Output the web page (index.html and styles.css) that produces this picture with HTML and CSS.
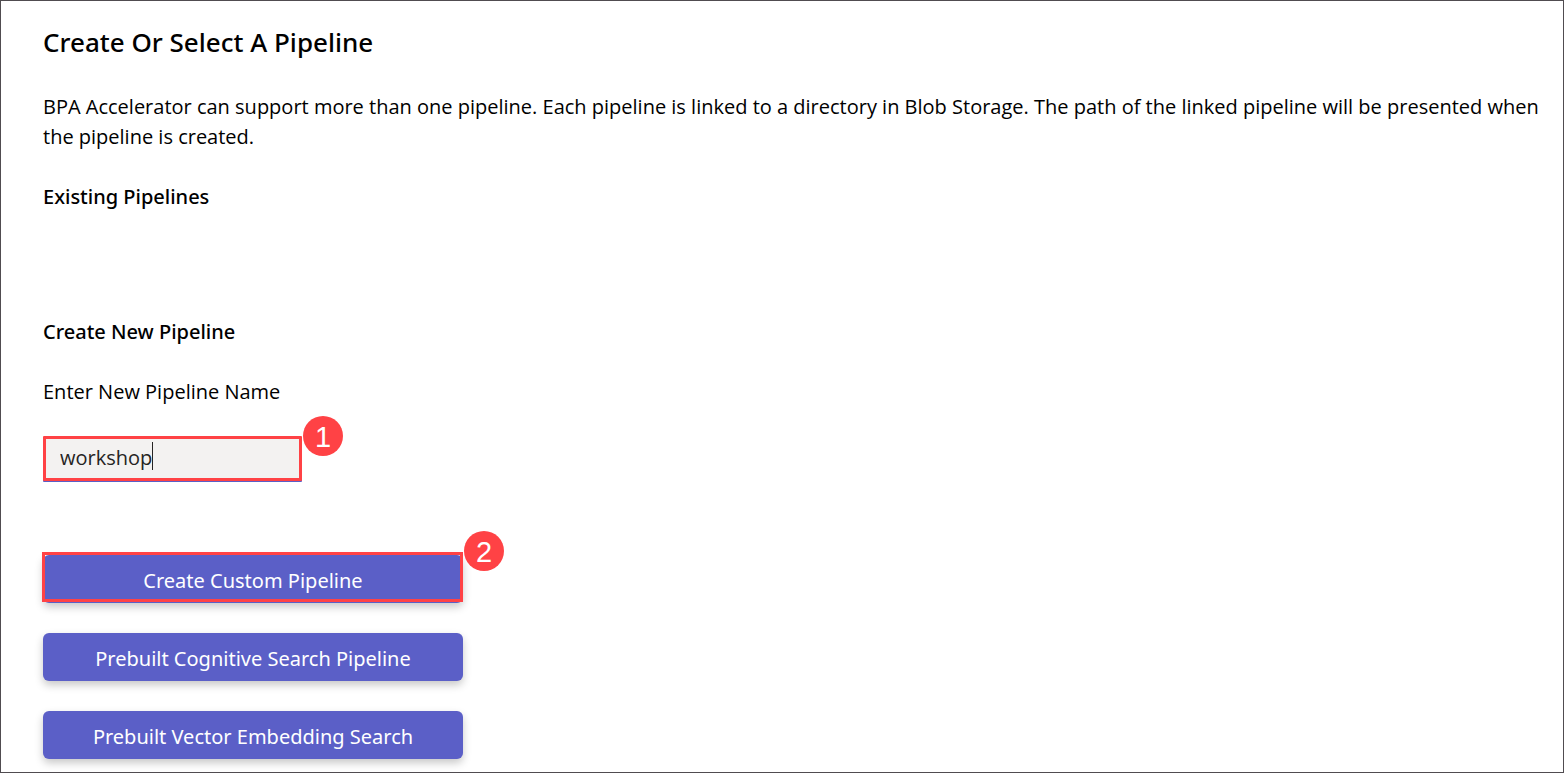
FILE: index.html
```html
<!DOCTYPE html>
<html lang="en">
<head>
<meta charset="utf-8">
<meta name="viewport" content="width=device-width, initial-scale=1">
<title>Create Or Select A Pipeline</title>
<link rel="stylesheet" href="styles.css">
</head>
<body class="page">
<main class="content">
  <h1 class="title">Create Or Select A Pipeline</h1>
  <p class="text">BPA Accelerator can support more than one pipeline. Each pipeline is linked to a directory in Blob Storage. The path of the linked pipeline will be presented when the pipeline is created.</p>
  <h2 class="subtitle existing">Existing Pipelines</h2>
  <h2 class="subtitle">Create New Pipeline</h2>
  <form class="form">
    <label class="text" for="pipeline-name">Enter New Pipeline Name</label>
    <div class="field">
      <input class="input" id="pipeline-name" type="text" value="workshop">
      <span class="caret"></span>
      <span class="badge">1</span>
    </div>
    <div class="actions">
      <div class="action">
        <button class="button" type="button">Create Custom Pipeline</button>
        <span class="marker"></span>
        <span class="badge badge-action">2</span>
      </div>
      <button class="button" type="button">Prebuilt Cognitive Search Pipeline</button>
      <button class="button" type="button">Prebuilt Vector Embedding Search</button>
    </div>
  </form>
</main>
</body>
</html>
```
FILE: styles.css
```css
* {
  box-sizing: border-box;
}

.page {
  margin: 0;
  min-height: 100vh;
  border: 1px solid #504c50;
  background: #fff;
  color: #000;
  font-family: "Segoe UI", "Open Sans", sans-serif;
  font-size: 20px;
  line-height: 30px;
}

.content {
  display: flex;
  flex-direction: column;
  gap: 30px;
  padding: 22px 24px 13px 42px;
}

.title,
.subtitle {
  margin: 0;
  font-family: "Segoe UI", "Noto Sans", sans-serif;
  font-weight: 500;
}

.title {
  font-size: 26px;
  line-height: 39px;
}

.subtitle {
  font-size: 20px;
}

.text {
  margin: 0;
}

.existing {
  margin-bottom: 75px;
}

.form {
  display: flex;
  flex-direction: column;
  align-items: flex-start;
}

.field {
  position: relative;
  width: 259px;
  margin-top: 29px;
}

.input {
  display: block;
  width: 100%;
  height: 45px;
  padding: 0 14px 3px;
  border: 3px solid #ff4245;
  border-radius: 1px;
  outline: none;
  box-shadow: 0 1px #5b5fc7;
  background: #f3f2f1;
  color: #252423;
  font: inherit;
}

.caret {
  position: absolute;
  top: 6px;
  left: 109px;
  width: 1px;
  height: 28px;
  background: #252423;
}

.badge {
  position: absolute;
  top: -20px;
  left: calc(100% + 1px);
  width: 40px;
  height: 40px;
  border-radius: 50%;
  background: #ff4245;
  color: #fff;
  font: 29px/42px "Liberation Sans", Arial, sans-serif;
  text-align: center;
}

.badge-action {
  top: -24px;
}

.actions {
  display: flex;
  flex-direction: column;
  gap: 30px;
  width: 420px;
  max-width: 100%;
  margin-top: 74px;
}

.action {
  position: relative;
}

.button {
  display: block;
  width: 100%;
  height: 48px;
  padding: 3px 24px 0;
  border: 0;
  border-radius: 6px;
  background: #5b5fc7;
  box-shadow: 0 4px 8px rgba(0, 0, 0, 0.22);
  color: #fff;
  font-family: "Segoe UI", "Noto Sans", sans-serif;
  font-size: 20px;
  line-height: 30px;
  cursor: pointer;
}

.marker {
  position: absolute;
  inset: -3px 0 1px -1px;
  border: 3px solid #ff4245;
  pointer-events: none;
}
```
